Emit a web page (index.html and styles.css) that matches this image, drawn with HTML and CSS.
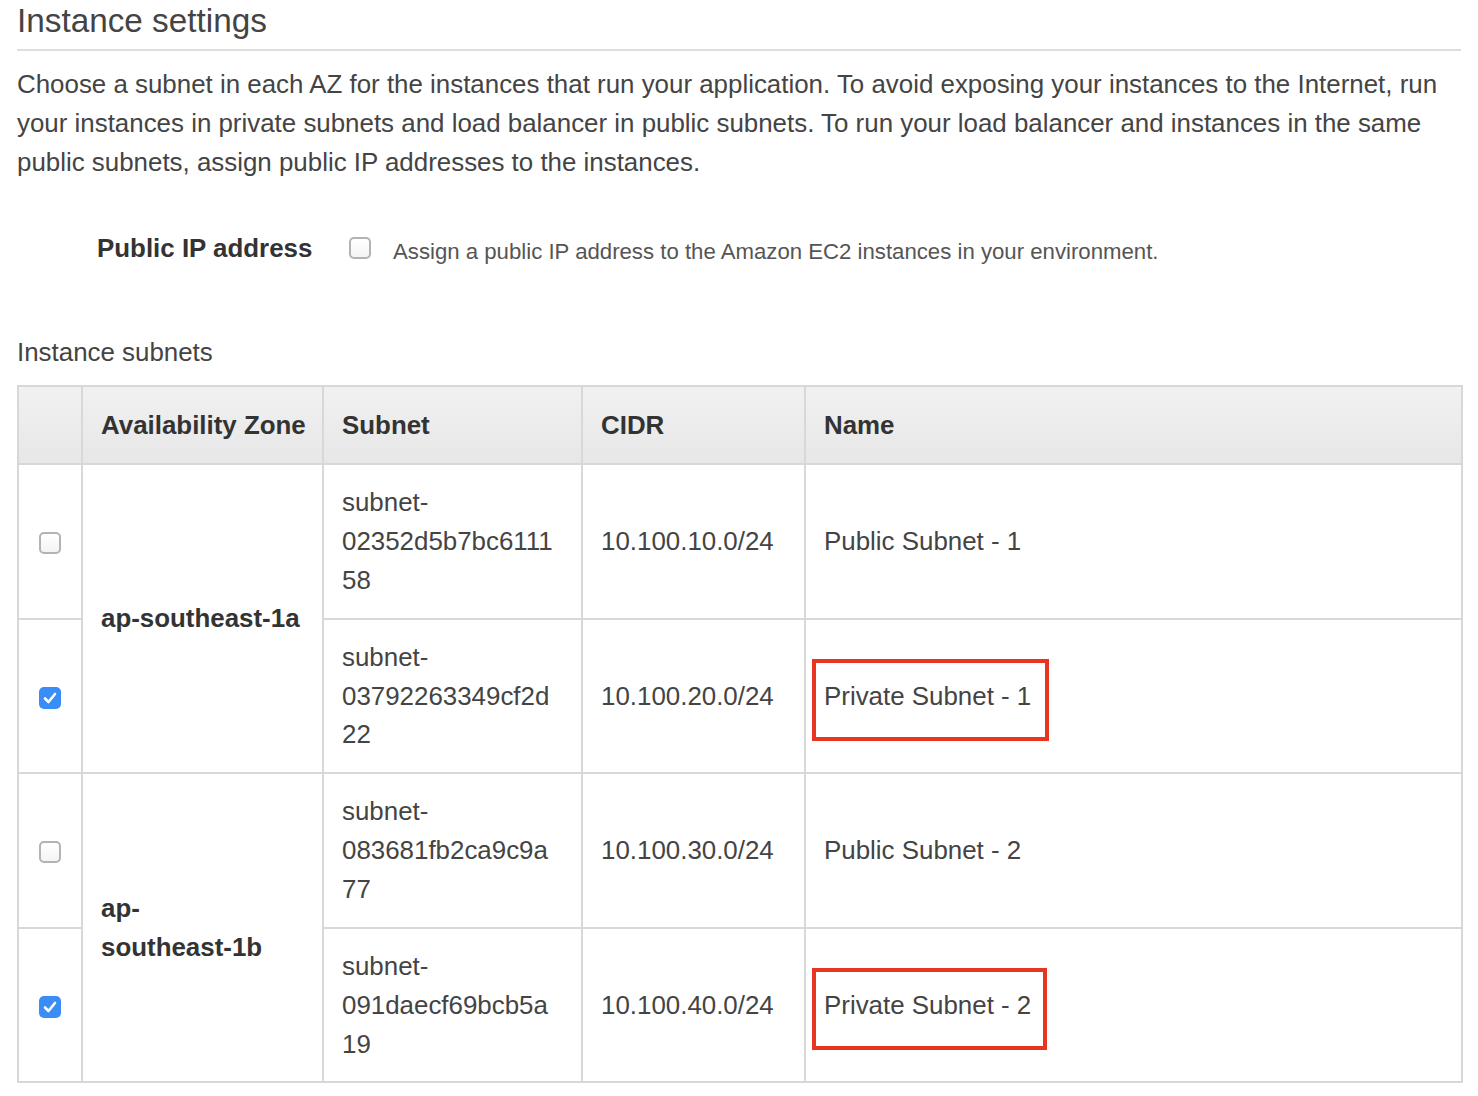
FILE: index.html
```html
<!DOCTYPE html>
<html lang="en">
<head>
<meta charset="utf-8">
<title>Instance settings</title>
<link rel="stylesheet" href="styles.css">
</head>
<body>
<div class="page">
  <h2 class="title">Instance settings</h2>
  <p class="intro">Choose a subnet in each AZ for the instances that run your application. To avoid exposing your instances to the Internet, run your instances in private subnets and load balancer in public subnets. To run your load balancer and instances in the same public subnets, assign public IP addresses to the instances.</p>

  <div class="ip-row">
    <div class="ip-label">Public IP address</div>
    <span class="cb"></span>
    <div class="ip-help">Assign a public IP address to the Amazon EC2 instances in your environment.</div>
  </div>

  <div class="subnets-label">Instance subnets</div>

  <table class="subnets">
    <colgroup>
      <col class="c-check">
      <col class="c-az">
      <col class="c-subnet">
      <col class="c-cidr">
      <col class="c-name">
    </colgroup>
    <thead>
      <tr>
        <th></th>
        <th>Availability Zone</th>
        <th>Subnet</th>
        <th>CIDR</th>
        <th>Name</th>
      </tr>
    </thead>
    <tbody>
      <tr>
        <td class="check"><span class="cb"></span></td>
        <td class="az" rowspan="2">ap-southeast-1a</td>
        <td>subnet-<br>02352d5b7bc6111<br>58</td>
        <td>10.100.10.0/24</td>
        <td>Public Subnet - 1</td>
      </tr>
      <tr>
        <td class="check"><span class="cb checked"><svg viewBox="0 0 22 22" width="22" height="22"><path d="M6 11.5 L9.5 15 L16 7" fill="none" stroke="#fff" stroke-width="2.6" stroke-linecap="round" stroke-linejoin="round"/></svg></span></td>
        <td>subnet-<br>03792263349cf2d<br>22</td>
        <td>10.100.20.0/24</td>
        <td><span class="name-wrap">Private Subnet - 1<span class="highlight hl-1"></span></span></td>
      </tr>
      <tr>
        <td class="check"><span class="cb"></span></td>
        <td class="az" rowspan="2">ap-<br>southeast-1b</td>
        <td>subnet-<br>083681fb2ca9c9a<br>77</td>
        <td>10.100.30.0/24</td>
        <td>Public Subnet - 2</td>
      </tr>
      <tr>
        <td class="check"><span class="cb checked"><svg viewBox="0 0 22 22" width="22" height="22"><path d="M6 11.5 L9.5 15 L16 7" fill="none" stroke="#fff" stroke-width="2.6" stroke-linecap="round" stroke-linejoin="round"/></svg></span></td>
        <td>subnet-<br>091daecf69bcb5a<br>19</td>
        <td>10.100.40.0/24</td>
        <td><span class="name-wrap">Private Subnet - 2<span class="highlight hl-2"></span></span></td>
      </tr>
    </tbody>
  </table>
</div>
</body>
</html>
```

FILE: styles.css
```css
* { box-sizing: border-box; }

html, body {
  margin: 0;
  padding: 0;
  background: #fff;
}

body {
  font-family: "Liberation Sans", Arial, Helvetica, sans-serif;
  color: #444;
  font-size: 25.9px;
  line-height: 38.85px;
}

.page {
  padding: 1px 17px 0 17px;
  width: 1478px;
}

.title {
  margin: 0;
  font-size: 33.3px;
  font-weight: normal;
  line-height: 40px;
  color: #444;
  padding-bottom: 8px;
  border-bottom: 2px solid #dedede;
}

.intro {
  margin: 14px 0 0 0;
  width: 1444px;
}

.ip-row {
  display: flex;
  align-items: center;
  margin-top: 47px;
  padding-left: 80px;
  height: 38.85px;
}

.ip-label {
  width: 252px;
  font-weight: bold;
  color: #333;
}

.ip-help {
  font-size: 22.2px;
  line-height: 33px;
  padding-top: 8px;
  color: #555;
  margin-left: 22px;
}

.cb {
  display: inline-block;
  width: 22px;
  height: 22px;
  border: 2px solid #b3b3b3;
  border-radius: 5px;
  background: linear-gradient(#ffffff, #f4f4f4);
  vertical-align: middle;
  flex: none;
}

.cb.checked {
  border: none;
  background: #3a8cf6;
}

.cb.checked svg { display: block; }

.subnets-label {
  margin-top: 66px;
  color: #444;
}

.subnets {
  margin-top: 13px;
  width: 1444px;
  border-collapse: collapse;
  table-layout: fixed;
  border: 2px solid #d8d8d8;
}

.c-check { width: 64px; }
.c-az { width: 241px; }
.c-subnet { width: 259px; }
.c-cidr { width: 223px; }
.c-name { width: 657px; }

.subnets th,
.subnets td {
  border: 2px solid #d8d8d8;
  padding: 18px 18px;
  text-align: left;
  vertical-align: middle;
}

.subnets th {
  height: 78px;
  padding-top: 0;
  padding-bottom: 0;
  font-weight: bold;
  color: #333;
  white-space: nowrap;
  background: linear-gradient(#f1f1f1, #e7e7e7);
}

.subnets td {
  height: 153.5px;
  color: #444;
}

.subnets td.check {
  text-align: center;
  padding: 0;
}

.subnets td.check .cb {
  vertical-align: middle;
}

.subnets td.az {
  font-weight: bold;
  color: #333;
}

.name-wrap {
  position: relative;
  display: inline-block;
}

.highlight {
  position: absolute;
  left: -12px;
  top: -18px;
  height: 82px;
  border: 4px solid #e83421;
}

.hl-1 { width: 237px; }
.hl-2 { width: 235px; }
```
